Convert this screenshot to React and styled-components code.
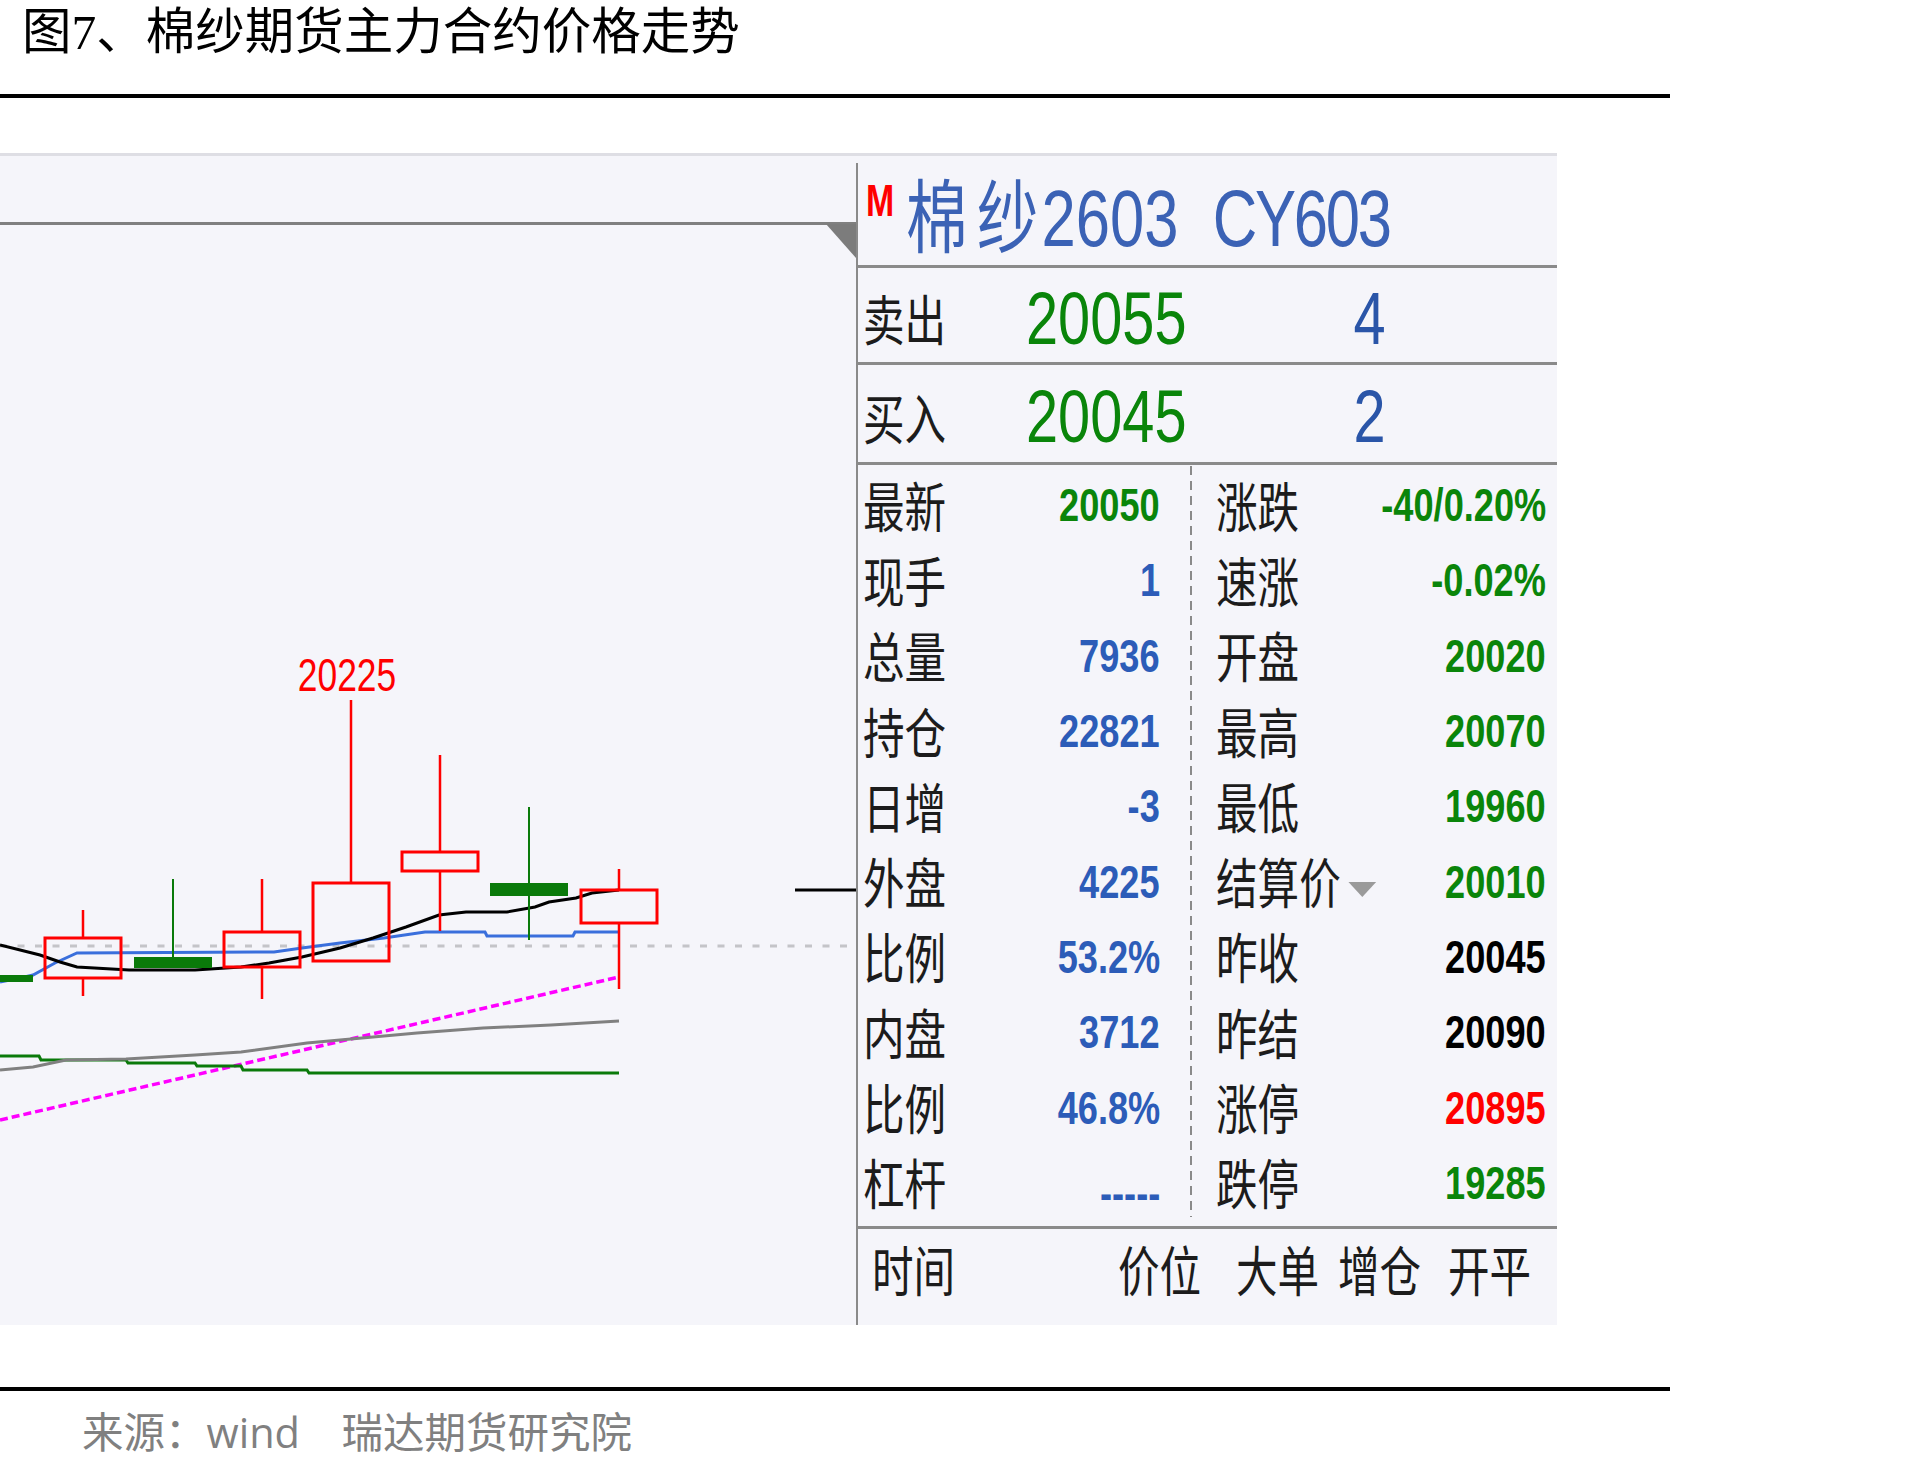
import React from 'react';
import styled, { createGlobalStyle } from 'styled-components';

// the terminal screenshot in the reference is squeezed horizontally
const SQUEEZE = 0.77;

const GREEN = '#0a850a';
const BLUE = '#2c5cb8';
const RED = '#ff0000';
const LINE = '#8a8a8a';

const GlobalStyle = createGlobalStyle`
    html, body {
        margin: 0;
        padding: 0;
        background: #fff;
    }
    body {
        font-family: "Noto Sans CJK SC", sans-serif;
    }
`

const Page = styled.div`
    width: 1925px;
    height: 1469px;
    overflow: hidden;
`
const Title = styled.h1`
    margin: 0;
    padding-left: 22px;
    height: 66px;
    font: 400 49.5px/66px "Liberation Serif", "Noto Sans CJK SC", serif;
    color: #000;
    white-space: nowrap;
`
const Rule = styled.div`
    width: 1670px;
    height: 4px;
    background: #000;
    margin-top: ${({top}) => top + 'px'};
`
const Figure = styled.div`
    display: flex;
    width: 1557px;
    height: 1172px;
    margin-top: 55px;
    box-sizing: border-box;
    background: #f5f5fa;
    border-top: 3px solid #dedee4;
`
const ChartArea = styled.div`
    width: 856px;
    height: 100%;
    flex-shrink: 0;
    svg { display: block; }
`
const InfoPanel = styled.div`
    width: 701px;
    min-width: 0;
    flex: none;
    box-sizing: border-box;
    margin-top: 7px;
    border-left: 2px solid ${LINE};
    display: flex;
    flex-direction: column;
`
const Squish = styled.span`
    display: inline-block;
    white-space: pre;
    transform: scaleX(${SQUEEZE}) ${({dy}) => (dy ? `translateY(${dy}px)` : '')};
    transform-origin: ${({right}) => (right ? 'right' : 'left')} center;
`
const Label = styled(Squish)`
    font: 400 54px/1 "Noto Sans CJK SC", sans-serif;
    color: #1c1c1c;
`
const Value = styled(Squish).attrs({ right: true })`
    justify-self: end;
    font: 700 47px/1 "Liberation Sans", sans-serif;
    color: ${({color}) => color};
`
const Header = styled.div`
    display: flex;
    align-items: flex-start;
    height: 105px;
    box-sizing: border-box;
    padding: 16px 0 0 8px;
    border-bottom: 3px solid ${LINE};
`
const Mark = styled(Squish)`
    font: 700 44px/1 "Liberation Sans", sans-serif;
    color: ${RED};
`
const Contract = styled(Squish)`
    margin-left: 3px;
    font: 400 80px/1 "Liberation Sans", "Noto Sans CJK SC", sans-serif;
    color: #3b62b5;
`
const Spaced = styled.span`
    letter-spacing: ${({ls}) => ls + 'px'};
`
const QuoteRow = styled.div`
    display: grid;
    grid-template-columns: 163px 230px 130px;
    align-items: center;
    height: ${({h}) => h + 'px'};
    box-sizing: border-box;
    padding: 6px 0 0 5px;
    border-bottom: 3px solid ${LINE};
`
const Price = styled(Squish)`
    font: 400 75px/1 "Liberation Sans", sans-serif;
    color: ${GREEN};
`
const Qty = styled(Squish).attrs({ right: true })`
    justify-self: end;
    font: 400 75px/1 "Liberation Sans", sans-serif;
    color: #2a55a8;
`
const StatsGrid = styled.div`
    display: grid;
    grid-template-columns: 332px minmax(0, 1fr);
    height: 764px;
    box-sizing: border-box;
    padding-top: 2px;
    border-bottom: 3px solid ${LINE};
    background: repeating-linear-gradient(to bottom, ${LINE} 0 9px, transparent 9px 15px) 332px 1px / 2px 751px no-repeat;
`
const StatCol = styled.div`
    display: grid;
    grid-auto-rows: 75.3px;
    min-width: 0;
    padding: ${({side}) => (side === 'left' ? '0 30px 0 5px' : '0 11px 0 26px')};
`
const StatRow = styled.div`
    display: grid;
    grid-template-columns: minmax(0, 1fr) auto;
    align-items: center;
`
const LabelWithMenu = styled.span`
    display: inline-flex;
    align-items: center;
`
const DownArrow = styled.span`
    width: 0;
    height: 0;
    margin: 16px 0 0 10px;
    border-left: 18px solid transparent;
    border-right: 18px solid transparent;
    border-top: 15px solid #9a9a9a;
`
const TradeHead = styled.div`
    display: grid;
    grid-template-columns: 246px 118px 102px 110px auto;
    padding: 13px 0 0 14px;
`
const Source = styled.div`
    margin-top: 21px;
    padding-left: 82px;
    font: 400 41.5px/41px "Open Sans", "Noto Sans CJK SC", sans-serif;
    color: #808080;
    white-space: pre;
`

const candles = [
    { cx: -6, top: 975, bottom: 982, hi: 975, lo: 982, up: false },
    { cx: 83, top: 938, bottom: 978, hi: 910, lo: 996, up: true },
    { cx: 173, top: 957, bottom: 968, hi: 879, lo: 968, up: false },
    { cx: 262, top: 932, bottom: 967, hi: 879, lo: 999, up: true },
    { cx: 351, top: 883, bottom: 961, hi: 700, lo: 961, up: true },
    { cx: 440, top: 852, bottom: 871, hi: 755, lo: 931, up: true },
    { cx: 529, top: 883, bottom: 896, hi: 807, lo: 940, up: false },
    { cx: 619, top: 890, bottom: 923, hi: 869, lo: 989, up: true },
]

const averages = [
    { color: '#0a7a0a', points: '0,1056 39,1056 41,1060 126,1060 128,1063 195,1063 197,1066 241,1066 243,1070 307,1070 309,1073 619,1073' },
    { color: '#808080', points: '0,1070 33,1067 66,1060 126,1059 195,1055 241,1052 307,1043 373,1037 417,1033 483,1028 551,1025 619,1021' },
    { color: '#3a6fdc', points: '0,982 20,978 33,975 55,963 77,953 274,952 302,948 340,943 384,938 425,932 485,932 487,936 573,936 575,932 619,932' },
    { color: '#000000', points: '0,945 40,955 60,962 77,967 129,970 195,970 241,967 269,963 302,957 340,948 373,938 406,927 439,915 466,912 507,912 535,907 549,902 576,898 592,893 619,890' },
]

function Candle({ cx, top, bottom, hi, lo, up }) {
    const color = up ? RED : '#0a7a0a'
    return (
        <g>
            {hi < top && <line x1={cx} y1={hi} x2={cx} y2={top} stroke={color} strokeWidth={up ? 2.5 : 2} />}
            {lo > bottom && <line x1={cx} y1={bottom} x2={cx} y2={lo} stroke={color} strokeWidth={up ? 2.5 : 2} />}
            {up
                ? <rect x={cx - 38} y={top} width={76} height={bottom - top} fill="none" stroke={color} strokeWidth={3} />
                : <rect x={cx - 39} y={top} width={78} height={bottom - top} fill={color} />}
        </g>
    )
}

function KChart() {
    return (
        <svg width="856" height="1169" viewBox="0 0 856 1169">
            <g transform="translate(0 -156)">
                <rect x="0" y="222" width="856" height="3" fill="#808080" />
                <polygon points="826,224 856,224 856,258" fill="#7c7c7c" />
                <line x1="0" y1="946" x2="852" y2="946" stroke="#c4c4c8" strokeWidth="3" strokeDasharray="7 10.5" />
                <line x1="795" y1="890" x2="856" y2="890" stroke="#000" strokeWidth="3" />
                <line x1="0" y1="1120" x2="619" y2="977" stroke="#ff00ff" strokeWidth="3.5" strokeDasharray="8 4" />
                {averages.map(a => (
                    <polyline key={a.color} points={a.points} fill="none" stroke={a.color} strokeWidth="3" />
                ))}
                {candles.map(c => <Candle key={c.cx} {...c} />)}
                <text transform="translate(347 691) scale(0.77 1)" textAnchor="middle" fontSize="46" fill={RED} fontFamily="Liberation Sans, sans-serif">20225</text>
            </g>
        </svg>
    )
}

const leftStats = [
    ['最新', '20050', GREEN],
    ['现手', '1', BLUE],
    ['总量', '7936', BLUE],
    ['持仓', '22821', BLUE],
    ['日增', '-3', BLUE],
    ['外盘', '4225', BLUE],
    ['比例', '53.2%', BLUE],
    ['内盘', '3712', BLUE],
    ['比例', '46.8%', BLUE],
    ['杠杆', '-----', BLUE],
]

const rightStats = [
    ['涨跌', '-40/0.20%', GREEN],
    ['速涨', '-0.02%', GREEN],
    ['开盘', '20020', GREEN],
    ['最高', '20070', GREEN],
    ['最低', '19960', GREEN],
    ['结算价', '20010', GREEN],
    ['昨收', '20045', '#000'],
    ['昨结', '20090', '#000'],
    ['涨停', '20895', RED],
    ['跌停', '19285', GREEN],
]

export default function App() {
    return (
        <Page>
            <GlobalStyle />
            <Title>图7、棉纱期货主力合约价格走势</Title>
            <Rule top={28} />
            <Figure>
                <ChartArea>
                    <KChart />
                </ChartArea>
                <InfoPanel>
                    <Header>
                        <Mark>M</Mark>
                        <Contract>
                            <Spaced ls={12}>棉</Spaced><Spaced ls={4}>纱</Spaced>{'2603  '}<Spaced ls={-3}>CY603</Spaced>
                        </Contract>
                    </Header>
                    <QuoteRow h={97}>
                        <Label>卖出</Label>
                        <Price>20055</Price>
                        <Qty>4</Qty>
                    </QuoteRow>
                    <QuoteRow h={100}>
                        <Label>买入</Label>
                        <Price>20045</Price>
                        <Qty>2</Qty>
                    </QuoteRow>
                    <StatsGrid>
                        <StatCol side="left">
                            {leftStats.map(([label, value, color], i) => (
                                <StatRow key={i}>
                                    <Label>{label}</Label>
                                    <Value color={color} dy={value === '-----' ? 10 : 0}>{value}</Value>
                                </StatRow>
                            ))}
                        </StatCol>
                        <StatCol side="right">
                            {rightStats.map(([label, value, color], i) => (
                                <StatRow key={i}>
                                    {label === '结算价'
                                        ? <Label><LabelWithMenu>{label}<DownArrow /></LabelWithMenu></Label>
                                        : <Label>{label}</Label>}
                                    <Value color={color}>{value}</Value>
                                </StatRow>
                            ))}
                        </StatCol>
                    </StatsGrid>
                    <TradeHead>
                        <Label>时间</Label>
                        <Label>价位</Label>
                        <Label>大单</Label>
                        <Label>增仓</Label>
                        <Label>开平</Label>
                    </TradeHead>
                </InfoPanel>
            </Figure>
            <Rule top={62} />
            <Source>{'来源：wind　瑞达期货研究院'}</Source>
        </Page>
    )
}
